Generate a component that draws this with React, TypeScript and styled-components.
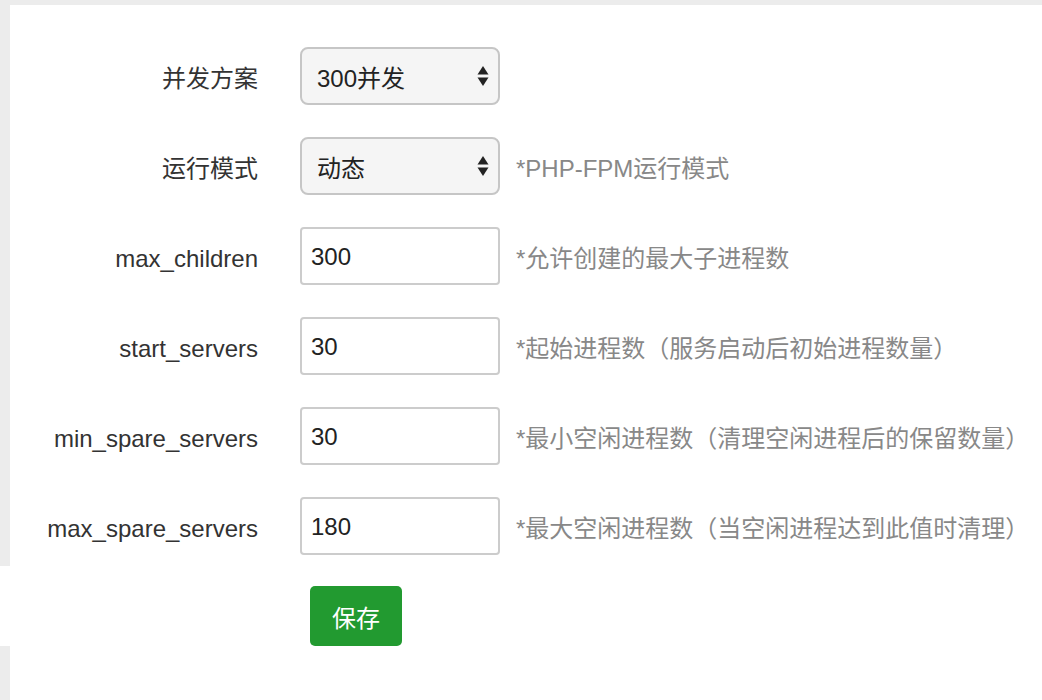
import React from "react";
import styled, { createGlobalStyle } from "styled-components";

const Global = createGlobalStyle`
  html, body { margin: 0; padding: 0; background: #fff; }
  body { font-family: "Liberation Sans", "Noto Sans CJK SC", sans-serif; }
`;

const Page = styled.div`
  display: flex;
  flex-direction: column;
  width: 1042px;
  height: 700px;
  overflow: hidden;
  background: #fff;
`;

const TopBar = styled.div`
  height: 5px;
  background: #ececec;
  flex: none;
`;

const Panel = styled.div`
  border-left: 10px solid #ececec;
  padding: 42px 0 11px;
  display: flex;
  flex-direction: column;
  gap: 32px;
  flex: none;
`;

const Row = styled.div`
  display: flex;
  align-items: center;
  height: 58px;
`;

const Label = styled.label<{ $latin?: boolean }>`
  width: 248px;
  text-align: right;
  font-size: 24px;
  color: #333;
  margin-right: 42px;
  white-space: nowrap;
  padding-top: ${(p) => (p.$latin ? "5px" : "0")};
`;

const SelectBox = styled.div`
  position: relative;
  box-sizing: border-box;
  width: 200px;
  height: 58px;
  border: 2px solid #c6c6c6;
  border-radius: 8px;
  background: #f5f5f5;
  display: flex;
  align-items: center;
  padding-left: 15px;
  font-size: 24px;
  color: #222;
`;

const Arrows = styled.svg`
  position: absolute;
  right: 9px;
  top: 50%;
  transform: translateY(-50%);
`;

const Input = styled.div`
  box-sizing: border-box;
  width: 200px;
  height: 58px;
  border: 2px solid #cccccc;
  border-radius: 4px;
  background: #fff;
  display: flex;
  align-items: center;
  padding: 2px 0 0 9px;
  font-size: 24px;
  color: #222;
`;

const Hint = styled.span`
  margin-left: 16px;
  font-size: 24px;
  color: #888;
  white-space: nowrap;
`;

const ButtonRow = styled.div`
  height: 80px;
  flex: none;
  padding: 20px 0 0 310px;
  box-sizing: border-box;
`;

const SaveButton = styled.button`
  width: 92px;
  height: 60px;
  border: none;
  border-radius: 5px;
  background: #229a30;
  color: #fff;
  font-family: "Liberation Sans", "Noto Sans CJK SC", sans-serif;
  font-size: 24px;
  padding: 0;
  cursor: pointer;
`;

const Footer = styled.div`
  flex: 1;
  border-left: 10px solid #ececec;
`;

const SelectArrows = () => (
  <Arrows width="12" height="22" viewBox="0 0 12 22">
    <polygon points="6,1 11.5,9.5 0.5,9.5" fill="#222" />
    <polygon points="0.5,12.5 11.5,12.5 6,21" fill="#222" />
  </Arrows>
);

const rows = [
  { label: "max_children", value: "300", hint: "*允许创建的最大子进程数" },
  { label: "start_servers", value: "30", hint: "*起始进程数（服务启动后初始进程数量）" },
  { label: "min_spare_servers", value: "30", hint: "*最小空闲进程数（清理空闲进程后的保留数量）" },
  { label: "max_spare_servers", value: "180", hint: "*最大空闲进程数（当空闲进程达到此值时清理）" },
];

export default function App() {
  return (
    <Page>
      <Global />
      <TopBar />
      <Panel>
        <Row>
          <Label>并发方案</Label>
          <SelectBox>
            300并发
            <SelectArrows />
          </SelectBox>
        </Row>
        <Row>
          <Label>运行模式</Label>
          <SelectBox>
            动态
            <SelectArrows />
          </SelectBox>
          <Hint>*PHP-FPM运行模式</Hint>
        </Row>
        {rows.map((r) => (
          <Row key={r.label}>
            <Label $latin>{r.label}</Label>
            <Input>{r.value}</Input>
            <Hint>{r.hint}</Hint>
          </Row>
        ))}
      </Panel>
      <ButtonRow>
        <SaveButton>保存</SaveButton>
      </ButtonRow>
      <Footer />
    </Page>
  );
}
